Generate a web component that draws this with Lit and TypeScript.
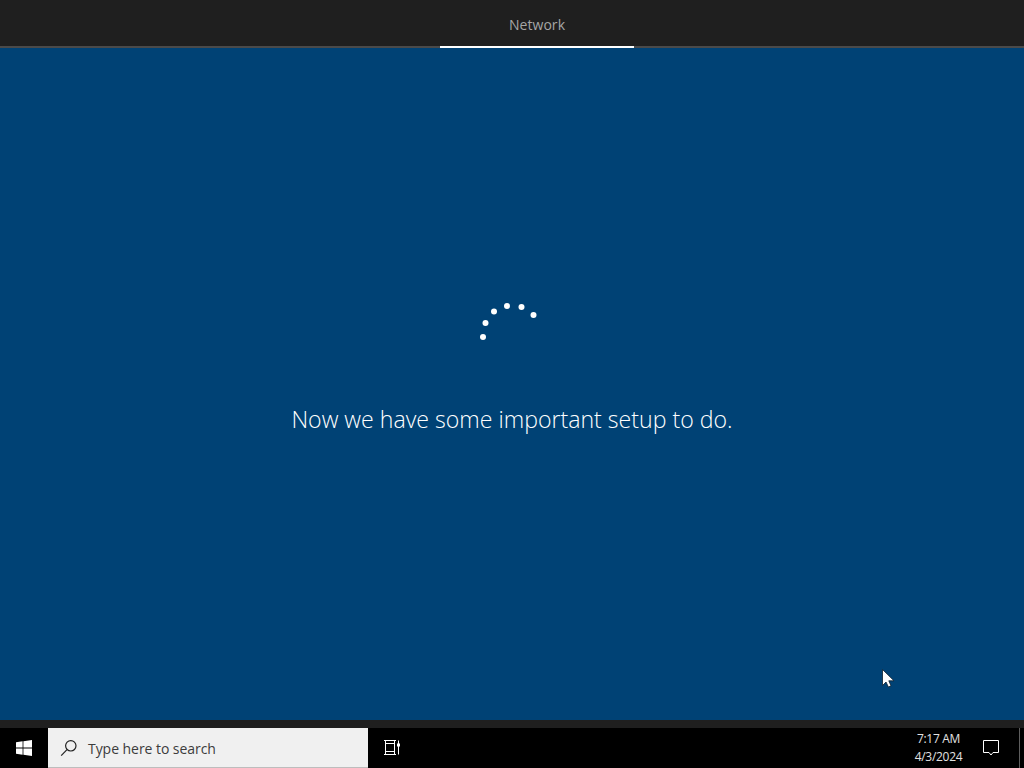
import { LitElement, html, css, svg } from 'lit';
import { customElement } from 'lit/decorators.js';

const DOTS = [
  [483, 337],
  [485.5, 323],
  [494, 311.5],
  [507, 306],
  [521.5, 307],
  [533.5, 315],
];

@customElement('app-root')
export class AppRoot extends LitElement {
  static styles = css`
    :host {
      display: flex;
      flex-direction: column;
      position: relative;
      width: 1024px;
      height: 768px;
      overflow: hidden;
      background: #1f1f1f;
      font-family: 'Open Sans', 'Liberation Sans', sans-serif;
    }

    .header {
      height: 46px;
      flex: none;
      display: flex;
      justify-content: center;
      background: #1f1f1f;
      border-bottom: 2px solid #4a4a4a;
    }

    .tab {
      width: 194px;
      margin-left: 50px;
      margin-bottom: -2px;
      border-bottom: 2px solid #fff;
      color: #a6a6a6;
      font-size: 14px;
      line-height: 49px;
      text-align: center;
      letter-spacing: 0.05px;
    }

    .main {
      height: 672px;
      flex: none;
      background: #004275;
      display: flex;
      flex-direction: column;
      align-items: center;
      padding-top: 252px;
      box-sizing: border-box;
    }

    .spinner {
      display: block;
      width: 70px;
      height: 44px;
      margin-right: 8px;
    }

    .message {
      margin-top: 57px;
      color: #fff;
      font-size: 23.13px;
      font-weight: 300;
      line-height: 36px;
      white-space: nowrap;
    }

    .gap {
      height: 8px;
      flex: none;
      background: #1f1f1f;
    }

    .taskbar {
      height: 40px;
      flex: none;
      background: #000;
      display: flex;
      align-items: stretch;
    }

    .start {
      width: 48px;
      display: flex;
      align-items: center;
      justify-content: center;
    }

    .search {
      width: 320px;
      display: flex;
      align-items: center;
      box-sizing: border-box;
      padding-left: 12px;
      padding-top: 1px;
      gap: 10px;
      background: #f0f0f0;
      border-bottom: 1px solid #bdbdbd;
      color: #3c3c3c;
      font-size: 14px;
      letter-spacing: -0.05px;
    }

    .task-view {
      width: 48px;
      display: flex;
      align-items: center;
      justify-content: center;
    }

    .spacer {
      flex: 1;
    }

    .clock {
      width: 76px;
      box-sizing: border-box;
      padding-left: 3px;
      display: flex;
      flex-direction: column;
      justify-content: center;
      text-align: center;
      color: #e2e2e2;
      font-size: 12px;
      line-height: 18px;
      letter-spacing: -0.3px;
    }

    .action {
      width: 32px;
      display: flex;
      align-items: center;
      justify-content: center;
    }

    .show-desktop {
      width: 5px;
      margin-left: 12px;
      box-sizing: border-box;
      border-left: 1px solid #5e5e5e;
    }

    .cursor {
      position: absolute;
      left: 881px;
      top: 668px;
      display: block;
    }
  `;

  render() {
    return html`
      <div class="header"><div class="tab">Network</div></div>

      <div class="main">
        <svg class="spinner" viewBox="473 300 70 44">
          ${DOTS.map(([x, y]) => svg`<circle cx=${x} cy=${y} r="3" fill="#fff"></circle>`)}
        </svg>
        <div class="message">Now we have some important setup to do.</div>
      </div>

      <div class="gap"></div>

      <div class="taskbar">
        <div class="start">
          <svg width="16" height="16" viewBox="0 0 16 16">
            <path fill="#fff" d="M0 2.3 6.6 1.3V7.5H0ZM7.4 1.2 16 0V7.5H7.4ZM0 8.4H6.6V14.7L0 13.7ZM7.4 8.4H16V16L7.4 14.8Z"></path>
          </svg>
        </div>
        <div class="search">
          <svg width="18" height="18" viewBox="0 0 18 18" fill="none" stroke="#222" stroke-width="1.2">
            <circle cx="10.8" cy="6.8" r="5.2"></circle>
            <path d="M7 10.6 1.2 16.6"></path>
          </svg>
          <span>Type here to search</span>
        </div>
        <div class="task-view">
          <svg width="16" height="16" viewBox="0 0 16 16" fill="none" stroke="#fff" stroke-width="1">
            <path d="M0 .5H12M0 14.5H12M1.5 .5V14.5M10.5 .5V14.5"></path>
            <rect x="1.5" y="3.5" width="9" height="8"></rect>
            <path d="M14.5 .5V14.5"></path>
            <rect x="13" y="3.5" width="3" height="3" fill="#fff" stroke="none"></rect>
          </svg>
        </div>
        <div class="spacer"></div>
        <div class="clock">
          <div>7:17 AM</div>
          <div>4/3/2024</div>
        </div>
        <div class="action">
          <svg width="16" height="16" viewBox="0 0 16 16" fill="none" stroke="#fff" stroke-width="1">
            <path d="M.5 .5H15.5V12.5H10L8 15 6 12.5H.5Z"></path>
          </svg>
        </div>
        <div class="show-desktop"></div>
      </div>

      <svg class="cursor" width="15" height="20" viewBox="0 0 15 20">
        <path fill="#fff" stroke="#10202c" stroke-width="0.8" d="M1.5 1.5V17.5L5 14 7.4 19 10 17.8 7.8 12.8H13Z"></path>
      </svg>
    `;
  }
}
